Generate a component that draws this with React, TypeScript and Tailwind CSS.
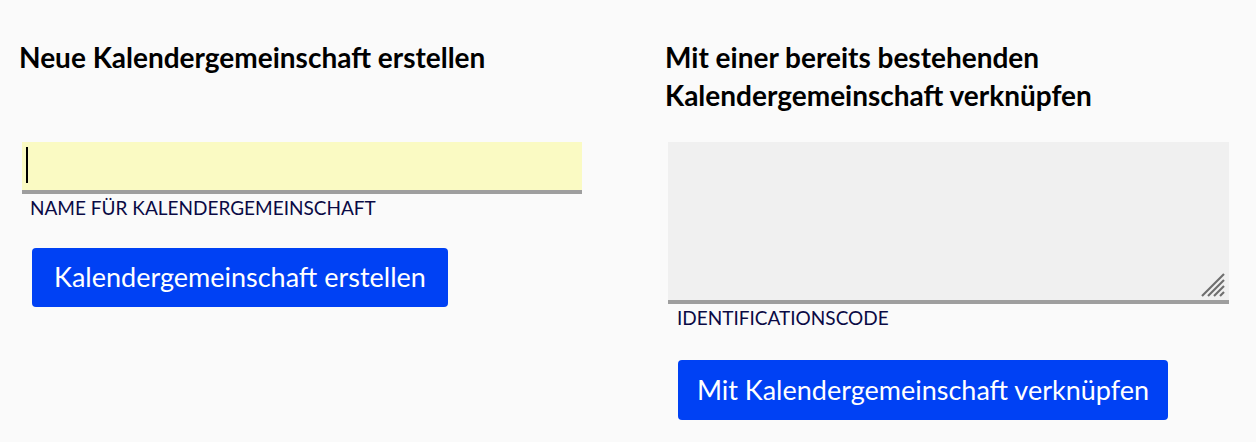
import React from "react";

const font = { fontFamily: "Lato, 'Noto Sans', sans-serif" };

export default function App() {
  return (
    <div className="min-h-[442px] w-[1256px] bg-[#fafafa] text-black" style={font}>
      <div className="flex pt-[38px]">
        <div className="w-[646px] shrink-0 pl-[19px]">
          <h2 className="text-[28px] font-bold leading-[38px] text-black">Neue Kalendergemeinschaft erstellen</h2>
          <div className="mt-[66px] w-[563px] pl-[3px]">
            <div className="relative h-[52px] border-b-4 border-[#9e9e9e] bg-[#fafac3]">
              <span className="absolute left-[4px] top-[5px] h-[36px] w-[2px] bg-black" />
            </div>
            <div className="pl-[8px] pt-[2px] text-[19px] uppercase leading-[24px] text-[#0a0a45]">Name für Kalendergemeinschaft</div>
            <button className="ml-[10px] mt-[28px] flex h-[59px] w-[416px] items-center justify-center rounded-[4px] bg-[#0041f4] text-[27px] text-white">
              Kalendergemeinschaft erstellen
            </button>
          </div>
        </div>
        <div className="w-[610px] shrink-0 pl-[19px]">
          <h2 className="w-[460px] text-[28px] font-bold leading-[38px] text-black">
            Mit einer bereits bestehenden Kalendergemeinschaft verknüpfen
          </h2>
          <div className="mt-[28px] w-[564px] pl-[3px]">
            <div className="relative h-[162px] border-b-4 border-[#9e9e9e] bg-[#f0f0f0]">
              <svg className="absolute bottom-[2px] right-[3px]" width="26" height="26" viewBox="0 0 26 26">
                <g stroke="#6e6e6e" strokeWidth="2.2" strokeLinecap="butt">
                  <line x1="2" y1="24" x2="24" y2="2" />
                  <line x1="8" y1="24" x2="24" y2="8" />
                  <line x1="14" y1="24" x2="24" y2="14" />
                  <line x1="20" y1="24" x2="24" y2="20" />
                </g>
              </svg>
            </div>
            <div className="pl-[9px] pt-[2px] text-[19px] uppercase leading-[24px] text-[#0a0a45]">Identificationscode</div>
            <button className="ml-[10px] mt-[30px] flex h-[60px] w-[490px] items-center justify-center rounded-[4px] bg-[#0041f4] text-[27px] text-white">
              Mit Kalendergemeinschaft verknüpfen
            </button>
          </div>
        </div>
      </div>
    </div>
  );
}
